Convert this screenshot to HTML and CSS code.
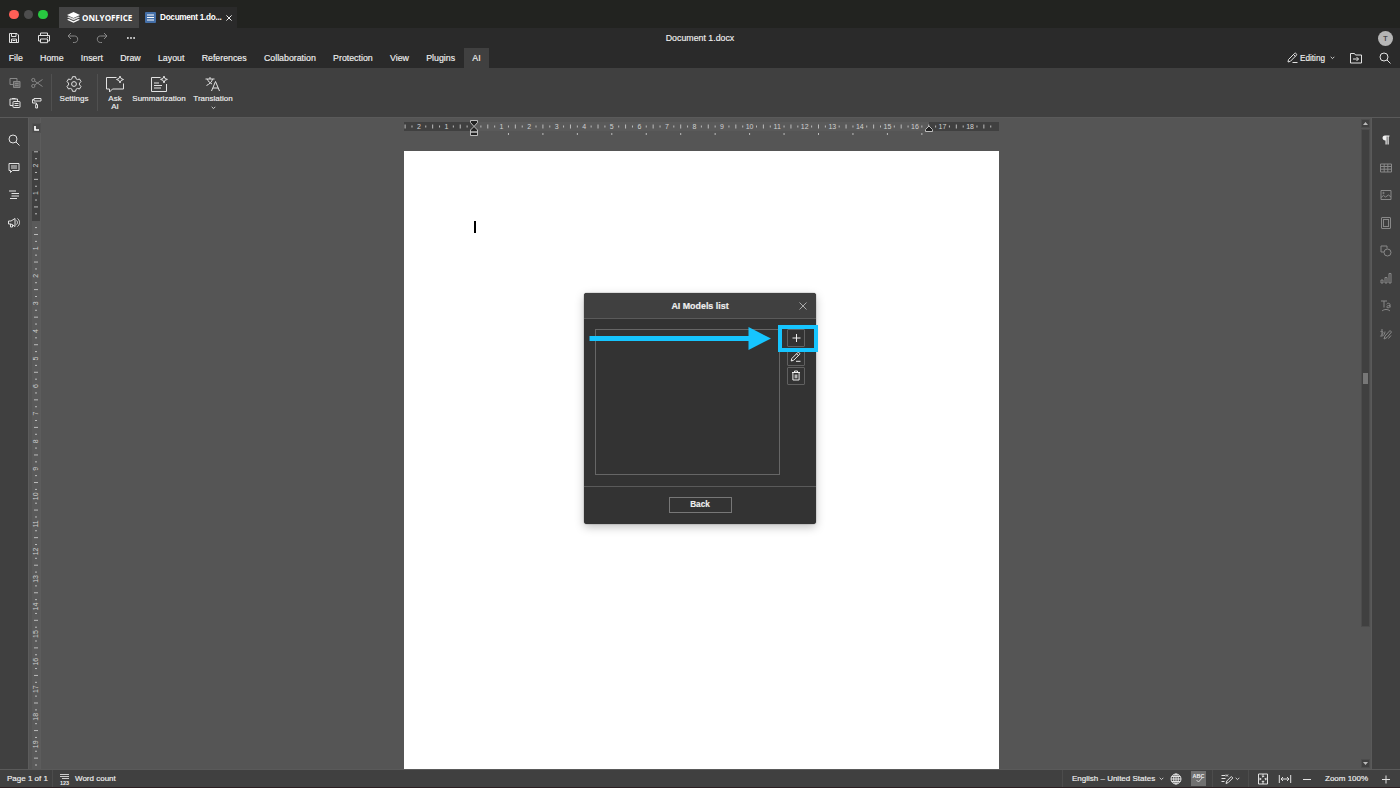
FILE: index.html
```html
<!DOCTYPE html>
<html lang="en">
<head>
    <meta charset="UTF-8">
    <meta name="viewport" content="width=device-width, initial-scale=1.0">
    <title>Document 1.docx</title>
    <link rel="stylesheet" href="styles.css">
</head>
<body>
    <div class="app">
        <div class="titlebar">
            <div class="lights">
                <span class="light red"></span>
                <span class="light gray"></span>
                <span class="light green"></span>
            </div>
            <div class="app-tab">
                <svg width="13" height="12" viewBox="0 0 13 12"><path d="M6.5 0L13 3 6.5 6 0 3z" fill="#fff"/><path d="M0 5.2l1.8-.8 4.7 2.2 4.7-2.2 1.8.8-6.5 3z" fill="#ddd"/><path d="M0 7.8L1.8 7l4.7 2.2L11.2 7l1.8.8-6.5 3z" fill="#fff"/></svg>
                <span>ONLYOFFICE</span>
            </div>
            <div class="doc-tab">
                <svg width="11" height="11" viewBox="0 0 11 11"><rect width="11" height="11" rx="1" fill="#446fa8"/><path d="M2 3h7M2 5.5h7M2 8h7" stroke="#fff" stroke-width="1"/></svg>
                <span class="doc-name">Document 1.do...</span>
                <svg width="6" height="6" viewBox="0 0 6 6"><path d="M.4.4l5.2 5.2M5.6.4L.4 5.6" stroke="#eee" fill="none"/></svg>
            </div>
        </div>

        <div class="header">
            <div class="quick">
                <div class="quick-left">
                    <svg class="icon" viewBox="0 0 14 14"><path d="M2.500 2.500h7.500l1.500 1.500v7.500h-9zM4.500 2.500v3h4.500v-3M4.500 11.500V8h5v3.500M5.500 9.500h3"/></svg>
                    <svg class="icon" viewBox="0 0 14 14"><path d="M3.500 4.500v-2.500h7v2.500M3.500 10H1.500V4.500h11V10h-2M3.500 8h7v3.700h-7zM10 6.300h1"/></svg>
                    <svg class="icon dim" viewBox="0 0 14 14"><path d="M5 2L2 5l3 3M2 5h6.500c2 0 3.200 1.300 3.200 3.200s-1.200 3.300-3.200 3.300H7"/></svg>
                    <svg class="icon dim" viewBox="0 0 14 14"><path d="M9 2l3 3-3 3M12 5H5.500C3.500 5 2.300 6.300 2.300 8.200s1.200 3.300 3.200 3.300H7"/></svg>
                    <svg class="icon fill" viewBox="0 0 14 14"><circle cx="3.900" cy="7" r=".9"/><circle cx="7" cy="7" r=".9"/><circle cx="10.100" cy="7" r=".9"/></svg>
                </div>
                <div class="doc-title">Document 1.docx</div>
                <div class="avatar">T</div>
            </div>
            <div class="menu">
                <span>File</span><span>Home</span><span>Insert</span><span>Draw</span><span>Layout</span><span>References</span><span>Collaboration</span><span>Protection</span><span>View</span><span>Plugins</span><span class="active">AI</span>
                <div class="menu-right">
                    <svg class="icon" viewBox="0 0 14 14"><path d="M2.500 8.500L8.700 2.300c.8-.8 2.600.9 1.800 1.800L4.400 10.300 2 11zM7.500 3.500l1.900 1.900M6.500 11.500h5"/></svg>
                    <b>Editing</b>
                    <svg class="chev" viewBox="0 0 5 4"><path d="M.7.8l1.800 1.800L4.300.8"/></svg>
                    <svg class="icon folder" viewBox="0 0 14 14"><path d="M1.500 12V2.500h4l1 1.500h6v8zM4 8h5.500M7.500 6l2 2-2 2"/></svg>
                    <svg class="icon" viewBox="0 0 14 14"><circle cx="6" cy="6" r="4"/><path d="M9 9l3.500 3.500"/></svg>
                </div>
            </div>
        </div>

        <div class="toolbar">
            <div class="clip">
                <svg class="icon dim" viewBox="0 0 14 14"><path d="M5 8.500H2v-6h7V5"/><path d="M5.500 5.500h6.500v6H5.500zM7 7.500h3.500M7 9.500h3.500" fill="#666"/></svg>
                <svg class="icon dim" viewBox="0 0 14 14"><circle cx="3.300" cy="4" r="1.600"/><circle cx="3.300" cy="10" r="1.600"/><path d="M4.600 5L12.500 10.500M4.600 9L12.500 3.500"/></svg>
                <svg class="icon" viewBox="0 0 14 14"><path d="M5 9.500H2V3h7.500v2M4 2.500h3.500"/><rect x="5" y="5.500" width="7" height="6" rx=".5"/><path d="M6.500 7.500h4M6.500 9.500h4"/></svg>
                <svg class="icon" viewBox="0 0 14 14"><path d="M4 2.500h7v2.500H4zM4 3.500H2.500V7h4v1.500M5.700 8.500h1.800V12H5.700z"/></svg>
            </div>
            <div class="tool settings">
                <svg width="18" height="18" viewBox="0 0 18 18"><circle cx="9" cy="9" r="2.400"/><path d="M7.500 1.700h3l.5 2 1.500.9 2-.6 1.500 2.600-1.500 1.500v1.800l1.500 1.500-1.500 2.600-2-.6-1.500.9-.5 2h-3l-.5-2-1.500-.9-2 .6L2 11.400l1.500-1.500V8.100L2 6.600 3.500 4l2 .6L7 3.700z"/></svg>
                <span>Settings</span>
            </div>
            <div class="tool ask">
                <svg width="20" height="18" viewBox="0 0 20 18"><path d="M11.500 2.500h-10v11.500h3v3l3-3h11V8.500M15 1l1 2.500 2.500 1-2.500 1-1 2.500-1-2.500-2.500-1 2.500-1z"/></svg>
                <span>Ask<br>AI</span>
            </div>
            <div class="tool summary">
                <svg width="18" height="18" viewBox="0 0 18 18"><path d="M10.500 2.500h-9v14h15V9M4 8h5M4 10.500h8M4 13h7M14 1l.9 2.500 2.500.9-2.500.9L14 8l-1-2.700-2.500-.9 2.500-.9z"/></svg>
                <span>Summarization</span>
            </div>
            <div class="tool translate">
                <svg width="18" height="18" viewBox="0 0 18 18"><path d="M1.500 4h9M6 2v2M2.500 10.500C5.500 9 8 7 8.500 4M3.500 4C4 6.500 6 8 8 9M7.500 16l4-9.500L15.500 16M9 13h5"/></svg>
                <span>Translation</span>
                <svg class="chev" viewBox="0 0 5 4"><path d="M.7.8l1.800 1.800L4.300.8"/></svg>
            </div>
        </div>

        <div class="main">
            <div class="side left">
                <svg class="icon" viewBox="0 0 14 14"><circle cx="6" cy="6" r="4"/><path d="M9 9l3.500 3.500"/></svg>
                <svg class="icon" viewBox="0 0 14 14"><path d="M2 2.500h10v7H5.500L3.500 11.500v-2H2zM4 5h6M4 7h6"/></svg>
                <svg class="icon" viewBox="0 0 14 14"><path d="M2 3h7M4.500 5.500H12M4.500 8H12M3 10.500h7"/></svg>
                <svg class="icon" viewBox="0 0 14 14"><path d="M1.500 5H4L8 2.500v8L4 8H1.500zM3.500 8v3h2V8.500M9.500 4.500c1.300 1 1.300 3 0 4M10.500 2.500c2.700 2 2.700 6 0 8"/></svg>
            </div>
            <div class="vruler">
                <div class="corner"><svg width="5" height="5" viewBox="0 0 5 5"><path d="M1 0v4h4" fill="none" stroke="#fff" stroke-width="1.700"/></svg></div>
                <svg id="v-ruler" width="8" height="618"></svg>
            </div>
            <div class="canvas">
                <svg id="h-ruler" width="595" height="18"></svg>
                <div class="page"><div class="cursor"></div></div>
            </div>
            <div class="scroll">
                <div class="arrow"><svg width="5" height="3" viewBox="0 0 5 3"><path d="M0 3L2.500 0 5 3z"/></svg></div>
                <div class="track"><div class="thumb"><div class="grip"></div></div></div>
                <div class="arrow"><svg width="5" height="3" viewBox="0 0 5 3"><path d="M0 0l2.500 3L5 0z"/></svg></div>
            </div>
            <div class="side right">
                <svg class="icon fill" viewBox="0 0 14 14"><path d="M6 2.500H10.500v1h-.8v8H8.500v-8H7.700v8H6.500V7.500C2.700 7.500 2.700 2.500 6 2.500z"/></svg>
                <svg class="icon dim" viewBox="0 0 14 14"><path d="M1.500 3h11v8h-11zM1.500 5.500h11M1.500 8.200h11M5.200 3v8M8.800 3v8"/></svg>
                <svg class="icon dim" viewBox="0 0 14 14"><path d="M2 2.500h10v9H2zM2 9.500l2.500-2 2 1.500L9.500 7l2.500 2"/><circle cx="4.500" cy="5" r=".7"/></svg>
                <svg class="icon dim" viewBox="0 0 14 14"><rect x="2.500" y="1.500" width="9" height="11" rx=".5"/><path d="M4 3.500h6M4 10.500h6M4.500 3.500v7M9.500 3.500v7"/></svg>
                <svg class="icon dim" viewBox="0 0 14 14"><path d="M5 8H2V2h6v2.500"/><circle cx="8.500" cy="8.500" r="3.500"/></svg>
                <svg class="icon dim" viewBox="0 0 14 14"><path d="M2 9h2v3H2zM6 6.500h2V12H6zM10 2.500h2V12h-2z"/></svg>
                <svg class="icon dim" viewBox="0 0 14 14"><path d="M2 2h6M5 2v6.500M11 8.500V5.500c0-1.700-3.300-1.500-3.300-.3M11 6.500c-4 0-4 2.300-2 2.300 1 0 2-.8 2-1.500M3 12c2-2 6-2 8 0"/></svg>
                <svg class="icon dim" viewBox="0 0 14 14"><path d="M3 2v6M1.500 4.500C4 4 5 5 3 7.500S1 9 3 9s3-3 3-4.500M5 12l1-3 5-5.500 1.500 1.500L8 10.500zM9.500 11.500l2.500-3"/></svg>
            </div>
        </div>

        <div class="status">
            <span class="pages">Page 1 of 1</span>
            <div class="words">
                <svg width="12" height="14" viewBox="0 0 12 14"><path d="M1 2.500h9M1 4.500h9M3 6.500h7"/><text x="1" y="13">123</text></svg>
                <span>Word count</span>
            </div>
            <div class="lang">
                <span>English – United States</span>
                <svg class="chev" viewBox="0 0 5 4"><path d="M.7.8l1.800 1.800L4.300.8"/></svg>
                <svg class="icon" viewBox="0 0 14 14"><circle cx="7" cy="7" r="5"/><ellipse cx="7" cy="7" rx="2.300" ry="5"/><path d="M2 7h10M2.700 4.500h8.600M2.700 9.500h8.600M7 2v10"/></svg>
                <div class="spell"><svg width="14" height="14" viewBox="0 0 14 14"><text x="1.500" y="6.500">ABC</text><path d="M5.500 9l2 2L11.500 6.500"/></svg></div>
            </div>
            <div class="review">
                <svg class="icon" viewBox="0 0 14 14"><path d="M1.500 3.500h4M1.500 6.500h4M1.500 9.500h3M6 2.500l2 2M8 2.500l-2 2M6 11.500l.8-2.500 4.500-4.500 1.500 1.500L8.300 10.500z"/></svg>
                <svg class="chev" viewBox="0 0 5 4"><path d="M.7.8l1.800 1.800L4.300.8"/></svg>
            </div>
            <div class="zoom">
                <svg class="icon" viewBox="0 0 14 14"><path d="M2.500 2h9v10h-9zM7 2v3M5.800 4L7 5.200 8.200 4M7 12V9M5.800 10L7 8.800 8.200 10M2.500 7H5M4 5.800L5.200 7 4 8.200M11.500 7H9M10 5.800L8.800 7 10 8.200"/></svg>
                <svg class="icon" viewBox="0 0 14 14"><path d="M1.300 3v8M12.700 3v8M3 7h8M5 5L3 7l2 2M9 5l2 2-2 2"/></svg>
                <svg class="icon" viewBox="0 0 14 14"><path d="M3 7.500h8"/></svg>
                <span>Zoom 100%</span>
                <svg class="icon" viewBox="0 0 14 14"><path d="M3 7.500h8M7 3.500v8"/></svg>
            </div>
        </div>
    </div>

    <div class="dialog">
        <div class="dialog-head">
            <span>AI Models list</span>
            <svg width="8" height="8" viewBox="0 0 8 8"><path d="M.5.5l7 7M7.500.5l-7 7"/></svg>
        </div>
        <div class="dialog-body">
            <div class="model-list"></div>
            <div class="actions">
                <button><svg viewBox="0 0 14 14"><path d="M7.500 3v8M3.500 7h8"/></svg></button>
                <button><svg viewBox="0 0 14 14"><path d="M2.800 8.500l6-6c.8-.8 2.600.9 1.800 1.800l-6 6-2.400.7zM7.500 3.700l1.900 1.900M7 11.300h4.500"/></svg></button>
                <button><svg viewBox="0 0 14 14"><path d="M3 3.500h8M5.500 3.500V2h3v1.500M3.900 3.500v7.500h6.200v-7.500M6.200 5.500v3.800M7.800 5.500v3.800"/></svg></button>
            </div>
        </div>
        <div class="dialog-foot"><button>Back</button></div>
        <svg class="pointer" width="182" height="23" viewBox="0 0 182 23"><path d="M.5 9h159V0l22.500 11.500L159.500 23v-9H.5z" fill="#16c5ff"/></svg>
        <div class="highlight"></div>
    </div>

    <script>
        const CM = 27.56; // pixels in one ruler centimetre

        // Numbers and quarter ticks on both sides of the zero mark
        function drawScale(from, to, zero, tick, label) {
            let out = "";
            for (let q = Math.ceil((from - zero) / CM * 4); zero + q * CM / 4 < to; q++) {
                const pos = zero + q * CM / 4;
                if (q === 0) continue;
                if (q % 4 === 0) {
                    out += label(pos, Math.abs(q / 4));
                } else {
                    out += tick(pos, q % 2 === 0 ? 4 : 2);
                }
            }
            return out;
        }

        let h = '<rect y="4" width="595" height="9" fill="#5a5a5a"/><rect y="4" width="70" height="9" fill="#404040"/><rect x="525" y="4" width="70" height="9" fill="#404040"/>';
        h += drawScale(0, 592, 70,
            (x, s) => `<rect x="${x - 0.5}" y="${8.5 - s / 2}" width="1" height="${s}" fill="#bbb"/>`,
            (x, n) => `<text x="${x}" y="11.3" text-anchor="middle">${n}</text>`);
        // default tab stops
        for (let i = 1; i <= 13; i++) {
            h += `<rect x="${70 + i * CM * 1.25 - 0.5}" y="15" width="1" height="2" fill="#bbb"/>`;
        }
        h += '<path d="M66.5 2.5h7v2L70 8.5l-3.5-4zM70 8.5l3.5 3.5v2h-7v-2zM66.5 14v3.500h7V14z" class="marker"/><path d="M521.5 13.5v-2l3.5-3.500 3.500 3.500v2z" class="marker"/>';
        document.getElementById("h-ruler").innerHTML = h;

        let v = '<rect width="8" height="618" fill="#5a5a5a"/><rect width="8" height="70" fill="#404040"/>';
        v += drawScale(0, 618, 69.7,
            (y, s) => `<rect x="${4 - s / 2}" y="${y - 0.5}" width="${s}" height="1" fill="#bbb"/>`,
            (y, n) => `<text transform="translate(6.4 ${y}) rotate(-90)" text-anchor="middle">${n}</text>`);
        document.getElementById("v-ruler").innerHTML = v;
    </script>
</body>
</html>
```
FILE: styles.css
```css
* {
    box-sizing: border-box;
}
body {
    margin: 0;
    font-family: "Liberation Sans", Arial, sans-serif;
    font-size: 8px;
    color: #f0f0f0;
    -webkit-text-stroke: 0.15px;
    background: #2b1f22;
    overflow: hidden;
}
svg {
    display: block;
    flex: none;
}
svg text {
    -webkit-text-stroke: 0;
}
.app {
    height: 787px;
    display: flex;
    flex-direction: column;
}
.icon {
    width: 14px;
    height: 14px;
    fill: none;
    stroke: #e2e2e2;
    stroke-width: 1;
}
.icon.dim {
    stroke: #888;
}
.icon.fill {
    fill: #f0f0f0;
    stroke: none;
}
.chev {
    width: 5px;
    height: 4px;
    fill: none;
    stroke: #ddd;
    stroke-width: 0.9;
}

/* window title bar */
.titlebar {
    height: 28px;
    background: #222320;
    display: flex;
    align-items: flex-end;
}
.lights {
    width: 59px;
    height: 28px;
    padding: 9.5px 0 0 9px;
    display: flex;
    gap: 5px;
}
.light {
    width: 9.5px;
    height: 9.5px;
    border-radius: 50%;
}
.red { background: #ff5f57; }
.gray { background: #4d4d4d; }
.green { background: #28c840; }
.app-tab {
    width: 80px;
    height: 21px;
    background: #444;
    display: flex;
    align-items: center;
    padding-left: 8px;
    gap: 2px;
    font: bold 8.1px "Open Sans", sans-serif;
    color: #fff;
    -webkit-text-stroke: 0;
}
.doc-tab {
    width: 98px;
    height: 21px;
    background: #2a2a2a;
    display: flex;
    align-items: center;
    padding-left: 6px;
}
.doc-name {
    width: 62px;
    margin: 0 4px 0 4px;
    font-weight: bold;
    font-size: 8.2px;
    letter-spacing: -0.28px;
    color: #fff;
    white-space: nowrap;
    -webkit-text-stroke: 0;
}

/* header */
.header {
    height: 40px;
    background: #2a2a2a;
}
.quick {
    height: 20px;
    display: grid;
    grid-template-columns: 1fr auto 1fr;
    align-items: center;
}
.quick-left {
    display: flex;
    gap: 15.2px;
    padding-left: 7.4px;
}
.doc-title {
    font-size: 8.8px;
}
.avatar {
    width: 15px;
    height: 15px;
    margin-right: 7px;
    border-radius: 50%;
    background: #b5b5b5;
    color: #333;
    font-size: 7px;
    line-height: 15px;
    text-align: center;
    justify-self: end;
}
.menu {
    height: 20px;
    display: flex;
    font-size: 8.8px;
    line-height: 20px;
}
.menu > span {
    padding: 0 8.65px;
}
.menu > .active {
    background: #404040;
}
.menu-right {
    margin-left: auto;
    display: flex;
    align-items: center;
    padding-right: 8px;
}
.menu-right b {
    font-weight: normal;
    font-size: 8.2px;
    line-height: 16px;
    padding-top: 1px;
    margin: 0 5px 0 0;
}
.menu-right .folder {
    margin: 0 15px 0 14px;
}

/* toolbar */
.toolbar {
    height: 50px;
    background: #404040;
    border-bottom: 1px solid #5a5a5a;
    display: flex;
}
.clip {
    width: 52px;
    height: 37px;
    margin-top: 6px;
    padding: 2px 0 0 7.5px;
    border-right: 1px solid #505050;
    display: grid;
    grid-template-columns: 14px 14px;
    grid-template-rows: 14px 14px;
    gap: 6px 8.5px;
}
.tool {
    display: flex;
    flex-direction: column;
    align-items: center;
    padding-top: 7px;
    line-height: 8.2px;
    text-align: center;
}
.tool svg:not(.chev) {
    fill: none;
    stroke: #e2e2e2;
    stroke-width: 1;
    margin-bottom: 2px;
}
.tool .chev {
    margin-top: 3px;
}
.settings {
    width: 46px;
    height: 37px;
    margin-top: 6px;
    padding: 1px 1px 0 0;
    border-right: 1px solid #505050;
}
.ask {
    width: 34px;
}
.summary {
    width: 54px;
}
.translate {
    width: 54px;
}

/* working area */
.main {
    flex: 1;
    display: flex;
    min-height: 0;
    background: #555;
}
.side {
    width: 28px;
    background: #404040;
    padding-top: 15px;
    display: flex;
    flex-direction: column;
    align-items: center;
    gap: 13.7px;
}
.side.right {
    width: 29px;
    border-left: 1px solid #5a5a5a;
}
.vruler {
    width: 13px;
    padding: 5px 1px 0 3px;
    border-left: 1px solid #5c5c5c;
    border-right: 1px solid #5c5c5c;
}
.corner {
    width: 9px;
    height: 10px;
    margin-bottom: 18px;
    border: 1px solid #505050;
    background: #484848;
    display: flex;
    align-items: center;
    justify-content: center;
}
#v-ruler text, #h-ruler text {
    font-size: 7px;
    fill: #d0d0d0;
}
.canvas {
    width: 1320px;
    display: flex;
    flex-direction: column;
    padding-left: 363px;
}
.marker {
    fill: #222;
    stroke: #ccc;
    stroke-width: 0.9;
}
#h-ruler {
    margin-bottom: 15px;
}
.page {
    width: 595px;
    flex: 1;
    background: #fff;
    padding: 70px 70px 0;
}
.cursor {
    width: 1.5px;
    height: 12px;
    background: #000;
}
.scroll {
    width: 10px;
    padding: 1px 1px 1px 0;
    display: flex;
    flex-direction: column;
    gap: 1px;
}
.scroll .arrow {
    height: 9px;
    background: #404040;
    border: 1px solid #4c4c4c;
    display: flex;
    align-items: center;
    justify-content: center;
    fill: #bbb;
}
.track {
    flex: 1;
}
.thumb {
    height: 498px;
    background: #404040;
    border: 1px solid #4c4c4c;
    display: flex;
    align-items: center;
    justify-content: center;
}
.grip {
    width: 5px;
    height: 11px;
    background: #777;
}

/* status bar */
.status {
    height: 18px;
    background: #404040;
    border-top: 1px solid #5a5a5a;
    display: flex;
    align-items: center;
    line-height: 18px;
}
.status > div {
    display: flex;
    align-items: center;
    height: 18px;
}
.pages {
    width: 53px;
    padding-left: 7px;
    border-right: 1px solid #4c4c4c;
}
.words {
    padding-left: 6px;
    gap: 4px;
}
.words svg, .spell svg {
    fill: none;
    stroke: #ddd;
    stroke-width: 0.9;
}
.status text {
    fill: #eee;
    stroke: none;
    font-size: 5.5px;
    font-weight: bold;
}
.lang {
    width: 150px;
    margin-left: auto;
    border-left: 1px solid #4c4c4c;
    padding-left: 9px;
}
.lang .chev {
    margin: 0 5px 0 4px;
}
.spell {
    width: 15px;
    height: 15px;
    margin-left: 8px;
    background: #707070;
}
.review {
    width: 36px;
    border-left: 1px solid #4c4c4c;
    padding-left: 7px;
    gap: 1px;
}
.zoom {
    width: 152px;
    border-left: 1px solid #4c4c4c;
    padding-left: 7px;
    gap: 8px;
}
.zoom span {
    margin: 0 3px;
}

/* AI models dialog */
.dialog {
    position: absolute;
    left: 584px;
    top: 293px;
    width: 232px;
    height: 231px;
    background: #333;
    border-radius: 3px;
    box-shadow: 0 3px 10px rgba(0, 0, 0, 0.25), 0 0 1px #222;
    display: flex;
    flex-direction: column;
}
.dialog svg {
    fill: none;
    stroke: #eee;
    stroke-width: 1;
}
.dialog-head {
    height: 26px;
    background: #404040;
    border-bottom: 1px solid #5a5a5a;
    border-radius: 3px 3px 0 0;
    display: grid;
    grid-template-columns: 1fr auto 1fr;
    align-items: center;
    font-size: 8.9px;
    font-weight: bold;
}
.dialog-head span {
    grid-column: 2;
}
.dialog-head svg {
    justify-self: end;
    margin-right: 9.5px;
    stroke: #aaa;
}
.dialog-body {
    height: 167px;
    display: flex;
    padding: 10px 11px;
    gap: 7px;
}
.model-list {
    width: 185px;
    height: 146px;
    border: 1px solid #666;
}
.actions {
    display: flex;
    flex-direction: column;
    gap: 1px;
}
.dialog button {
    display: block;
    padding: 0;
    border: 1px solid #606060;
    background: #333;
    color: #f0f0f0;
    font: bold 8.2px "Liberation Sans", Arial, sans-serif;
}
.actions button {
    width: 18px;
    height: 18px;
    padding: 1px;
    border-radius: 1px;
}
.dialog-foot {
    flex: 1;
    border-top: 1px solid #5a5a5a;
    padding-top: 10px;
    display: flex;
    justify-content: center;
}
.dialog-foot button {
    width: 63px;
    height: 16px;
    padding-bottom: 2px;
    border-color: #777;
}
.dialog .pointer {
    position: absolute;
    left: 5px;
    top: 34px;
    stroke: none;
}
.highlight {
    position: absolute;
    left: 194px;
    top: 32px;
    width: 40px;
    height: 27px;
    border: 4px solid #16c5ff;
}
```
